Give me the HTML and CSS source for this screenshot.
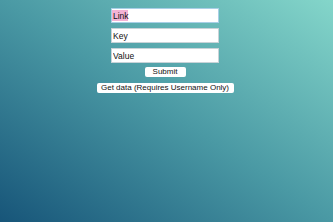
FILE: index.html
```html
<html>
<head>
    <title>Data Store</title>
    <link rel="stylesheet" href="styles.css">
</head>
<body>
    <div class="form">
        <input id="link" class="field selected" type="text" value="Link">
        <input id="key" class="field" type="text" value="Key">
        <input id="value" class="field" type="text" value="Value">
        <button class="btn submit">Submit</button>
        <button class="btn getdata">Get data (Requires Username Only)</button>
    </div>
</body>
</html>
```
FILE: styles.css
```css
html {
    height: 100%;
}
body {
    margin: 8px 0 0 0;
    padding-right: 3px;
    height: calc(100% - 8px);
    background: linear-gradient(to top right, #175579 0%, #4a99a4 50%, #84d6ca 100%);
    font-family: "Liberation Sans", Arial, sans-serif;
}
.form {
    display: flex;
    flex-direction: column;
    align-items: center;
}
.field {
    box-sizing: border-box;
    width: 108px;
    height: 15px;
    margin: 0 0 5px 0;
    padding: 0 1px;
    border: 1px solid #c9d3d8;
    background: #ffffff;
    color: #111111;
    font-family: "Liberation Sans", Arial, sans-serif;
    font-size: 8.5px;
    outline: none;
}
/* highlighted text in the first field */
.selected {
    border-color: #a9cfe6;
    background: #ffffff linear-gradient(#f3b3d5, #f3b3d5) no-repeat 0px 1px / 16px 11px;
}
.btn {
    box-sizing: border-box;
    height: 10px;
    padding: 0;
    border: none;
    border-radius: 2px;
    background: #ffffff;
    color: #111111;
    font-family: "Liberation Sans", Arial, sans-serif;
    font-size: 8px;
    line-height: 10px;
}
.submit {
    width: 41px;
    margin-top: -1px;
}
.getdata {
    width: 137px;
    margin-top: 6px;
}
```
